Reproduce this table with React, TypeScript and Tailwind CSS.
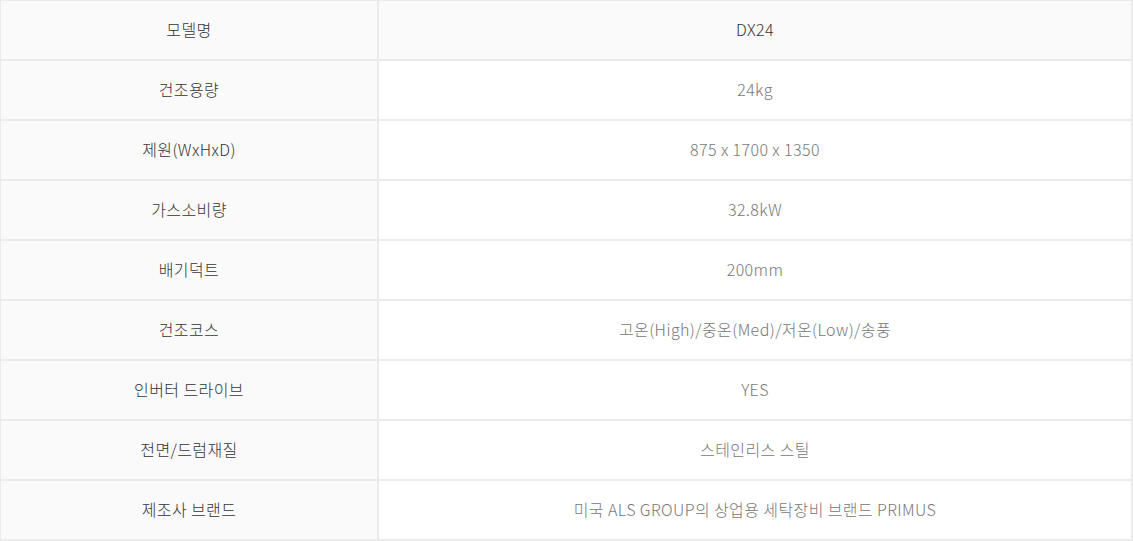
const specs = [
  { label: "모델명", value: "DX24" },
  { label: "건조용량", value: "24kg" },
  { label: "제원(WxHxD)", value: "875 x 1700 x 1350" },
  { label: "가스소비량", value: "32.8kW" },
  { label: "배기덕트", value: "200mm" },
  { label: "건조코스", value: "고온(High)/중온(Med)/저온(Low)/송풍" },
  { label: "인버터 드라이브", value: "YES" },
  { label: "전면/드럼재질", value: "스테인리스 스틸" },
  { label: "제조사 브랜드", value: "미국 ALS GROUP의 상업용 세탁장비 브랜드 PRIMUS" },
];

const App = () => {
  return (
    <div
      className="w-[1133px] bg-white text-[16px] font-light leading-none tracking-[0.4px]"
      style={{ fontFamily: '"Noto Sans CJK KR", "Noto Sans", sans-serif' }}
    >
      <div className="border-t border-l border-r-2 border-[#ebebeb]">
        {specs.map((row, i) => (
          <div key={row.label} className="flex h-[60px] border-b-2 border-[#ebebeb]">
            {/* label column */}
            <div className="w-[378px] shrink-0 flex items-center justify-center pb-[3px] bg-[#fafafa] border-r-2 border-[#ebebeb] text-[#333]">
              {row.label}
            </div>
            <div
              className={
                i === 0
                  ? "flex-1 flex items-center justify-center pb-[3px] bg-[#fafafa] text-[#333]"
                  : "flex-1 flex items-center justify-center pb-[3px] text-[#777]"
              }
            >
              {row.value}
            </div>
          </div>
        ))}
      </div>
    </div>
  );
};

export default App;
